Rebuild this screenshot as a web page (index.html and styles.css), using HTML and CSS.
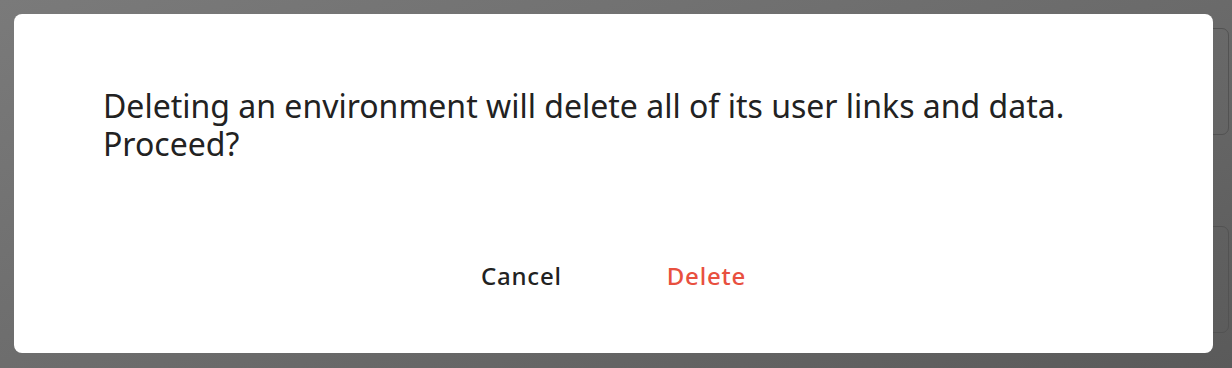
FILE: index.html
```html
<!DOCTYPE html>
<html lang="en">
<head>
<meta charset="utf-8">
<title>Delete environment</title>
<link rel="stylesheet" href="styles.css">
</head>
<body>
<div class="page">
  <div class="cards">
    <div class="card"></div>
    <div class="card"></div>
  </div>
</div>
<div class="backdrop">
  <div class="dialog" role="dialog">
    <p class="message">Deleting an environment will delete all of its user links and data. Proceed?</p>
    <div class="actions">
      <button class="btn btn-cancel">Cancel</button>
      <button class="btn btn-delete">Delete</button>
    </div>
  </div>
</div>
</body>
</html>
```

FILE: styles.css
```css
* { box-sizing: border-box; }
html, body { margin: 0; padding: 0; }
body {
  width: 1232px;
  height: 368px;
  overflow: hidden;
  font-family: "Noto Sans", "Open Sans", sans-serif;
  background: linear-gradient(160deg, #7a7a7a 0%, #6a6a6a 55%, #5a5a5a 100%);
}
.page {
  display: flex;
  justify-content: flex-end;
  padding: 28px 3px 0 0;
}
.cards {
  display: flex;
  flex-direction: column;
  gap: 91px;
  width: 200px;
}
.card {
  height: 107px;
  border: 1.5px solid #525252;
  border-radius: 7px;
}
.backdrop {
  position: absolute;
  inset: 0;
  padding: 14px 19px 15px 14px;
}
.dialog {
  background: #ffffff;
  border-radius: 8px;
  height: 339px;
  display: flex;
  flex-direction: column;
  padding: 73px 89px 0 89px;
}
.message {
  margin: 0;
  font-size: 32px;
  line-height: 38px;
  color: #222222;
}
.actions {
  display: flex;
  justify-content: center;
  gap: 105px;
  margin-top: 97px;
}
.btn {
  font-family: inherit;
  font-size: 24px;
  font-weight: 500;
  letter-spacing: 0.8px;
  background: none;
  border: 0;
  padding: 0;
  cursor: pointer;
  line-height: 32px;
}
.btn-cancel { color: #222222; }
.btn-delete { color: #e8503f; }
```
